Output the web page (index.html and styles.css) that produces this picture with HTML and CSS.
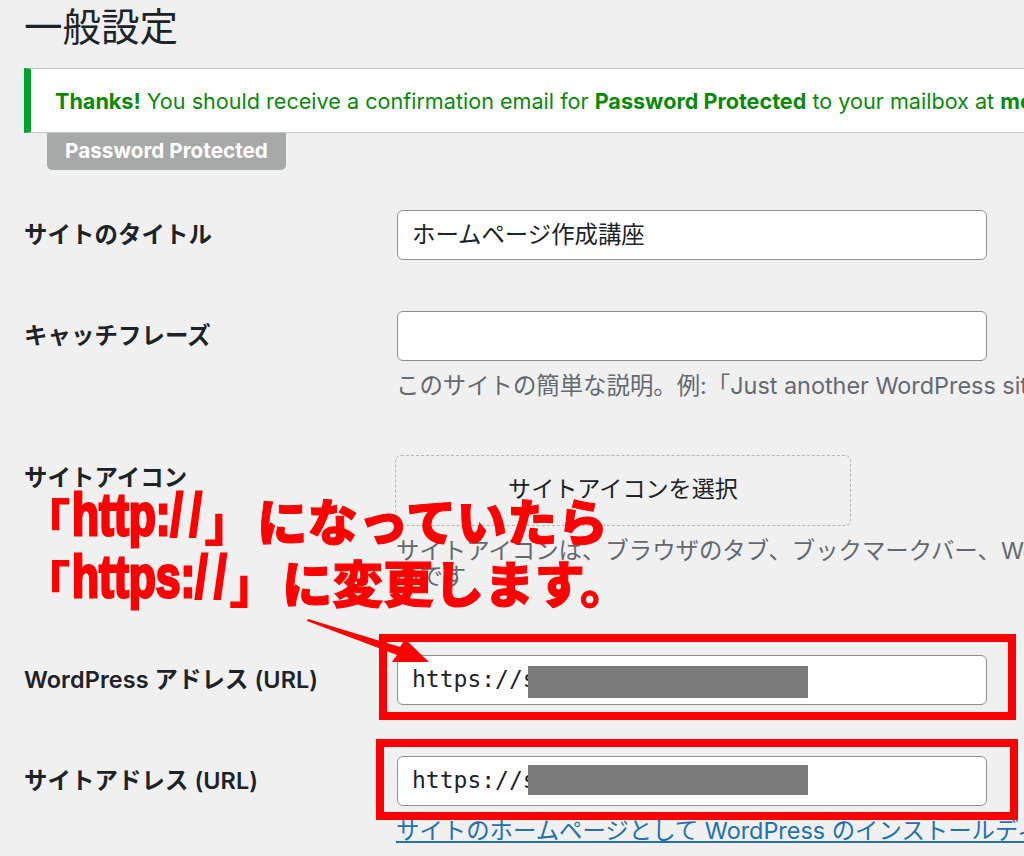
FILE: index.html
```html
<!DOCTYPE html>
<html lang="ja">
<head>
<meta charset="utf-8">
<title>一般設定</title>
<link rel="stylesheet" href="styles.css">
</head>
<body>
<main class="page">
  <h1 class="title">一般設定</h1>
  <div class="notice"><p><strong>Thanks!</strong> You should receive a confirmation email for <strong>Password Protected</strong> to your mailbox at <strong>me@example.com</strong></p></div>
  <div class="tab">Password Protected</div>
  <form class="form">
    <div class="row row-title">
      <label class="label">サイトのタイトル</label>
      <div class="field"><div class="input">ホームページ作成講座</div></div>
    </div>
    <div class="row row-tag">
      <label class="label">キャッチフレーズ</label>
      <div class="field"><div class="input"></div>
        <p class="desc">このサイトの簡単な説明。例:「Just another WordPress site」</p></div>
    </div>
    <div class="row row-icon">
      <label class="label label-icon">サイトアイコン</label>
      <div class="field"><div class="icon-pick">サイトアイコンを選択</div>
        <p class="desc desc-icon">サイトアイコンは、ブラウザのタブ、ブックマークバー、WordPress モバイルアプリで表示されるも<br>のです</p></div>
    </div>
    <div class="row row-wp">
      <label class="label">WordPress アドレス (URL)</label>
      <div class="field"><div class="input mono">https://s<span class="mask"></span></div></div>
    </div>
    <div class="row row-site">
      <label class="label">サイトアドレス (URL)</label>
      <div class="field"><div class="input mono">https://s<span class="mask mask-short"></span></div>
        <p class="desc desc-link"><a class="link" href="#">サイトのホームページとして WordPress のインストールディレクトリとは異なる場所を設定する</a></p></div>
    </div>
  </form>
</main>

<div class="callout">
  <div class="callout-line"><span class="bracket bracket-open">「</span><span class="cond cond-a"><span class="squeeze">http:<span class="slashes">//</span></span></span><span class="bracket">」</span><span class="kana">になっていたら</span></div>
  <div class="callout-line"><span class="bracket bracket-open">「</span><span class="cond cond-b"><span class="squeeze">https:<span class="slashes">//</span></span></span><span class="bracket">」</span><span class="kana">に変更します。</span></div>
</div>
<div class="frame frame-wp"></div>
<div class="frame frame-site"></div>
<svg class="arrow" width="140" height="60" viewBox="0 0 140 60"><path d="M2 1 L1 3 L91 37 L86 44 L123 44 L99 21 L94 29 Z" fill="#ff0000"/></svg>
</body>
</html>
```
FILE: styles.css
```css
* { box-sizing: border-box; }
html, body { margin: 0; padding: 0; }
body {
  position: relative;
  width: 1024px;
  height: 856px;
  overflow: hidden;
  background: #f0f0f0;
  color: #1d2327;
  font-family: Inter, "Noto Sans CJK JP", sans-serif;
  font-size: 23.4px;
}
.page { padding-left: 24px; }
.title {
  margin: 0;
  height: 68px;
  padding-top: 4px;
  font-size: 38.5px;
  line-height: 46px;
  font-weight: 400;
  color: #1d2327;
}
.notice {
  width: 1040px;
  height: 65px;
  background: #fff;
  border-left: 7px solid #00a32a;
  border-top: 1px solid #c3c4c7;
  border-bottom: 1px solid #c3c4c7;
  display: flex;
  align-items: center;
  padding-left: 24px;
  white-space: nowrap;
  color: #0a8a0a;
  font-size: 21.6px;
}
.notice p { margin: 0; }
.tab {
  width: 239px;
  height: 37px;
  margin-left: 23px;
  background: #a7a9a9;
  color: #fff;
  font-weight: 700;
  font-size: 20.7px;
  line-height: 35px;
  text-align: center;
  border-radius: 0 0 5px 5px;
}
.form { display: flex; flex-direction: column; }
.row { display: grid; grid-template-columns: 373px 1fr; white-space: nowrap; }
.row-title { margin-top: 40px; height: 101px; }
.row-tag { height: 144px; }
.row-icon { height: 200px; }
.row-wp { height: 101px; }
.label { font-weight: 600; line-height: 49px; font-size: 23.4px; letter-spacing: 0.1px; }
.label-icon { line-height: 46px; }
.input {
  width: 590px;
  height: 50px;
  background: #fff;
  border: 1.5px solid #8c8f94;
  border-radius: 6px;
  padding-left: 14px;
  font-size: 23.4px;
  line-height: 47px;
  position: relative;
}
.mono { font-family: "DejaVu Sans Mono", monospace; font-size: 23px; }
.mask {
  position: absolute;
  left: 130px;
  top: 10px;
  width: 280px;
  height: 32px;
  background: #7b7b7b;
}
.mask-short { top: 8px; height: 30px; }
.desc { margin: 12px 0 0 -1px; color: #646970; font-size: 23.4px; line-height: 26px; }
.desc-icon { margin-top: 12px; width: 1200px; }
.desc-link { margin-top: 12px; }
.icon-pick {
  width: 456px;
  height: 71px;
  margin-left: -2px;
  border: 1.5px dashed #b4b4b4;
  border-radius: 6px;
  display: flex;
  align-items: center;
  justify-content: center;
  padding-bottom: 7px;
  color: #1d2327;
  font-size: 23.1px;
}
.link { color: #2271b1; text-decoration: underline; }
.callout {
  position: absolute;
  left: 20px;
  top: 488px;
  color: #ff0000;
  font-family: "Noto Sans CJK JP", sans-serif;
  font-weight: 900;
  white-space: nowrap;
  font-size: 50.5px;
  line-height: 62px;
}
.callout-line { display: flex; align-items: center; height: 62px; }
.bracket { width: 50px; }
.bracket-open { width: 52px; }
.cond { display: block; font-family: "Liberation Sans", sans-serif; font-size: 60px; font-weight: 700; }
.cond-a { width: 132px; }
.cond-b { width: 157px; }
.squeeze {
  display: inline-block;
  -webkit-text-stroke: 3px #ff0000;
  transform: translateY(-4px) scaleX(0.74);
  transform-origin: left center;
}
.slashes { letter-spacing: 9px; }
.kana { -webkit-text-stroke: 1px #ff0000; margin-left: 3px; }
.frame { position: absolute; border: 8px solid #ff0000; }
.frame-wp { left: 379px; top: 634px; width: 637px; height: 86px; }
.frame-site { left: 376px; top: 739px; width: 642px; height: 81px; }
.arrow { position: absolute; left: 306px; top: 618px; }
```
